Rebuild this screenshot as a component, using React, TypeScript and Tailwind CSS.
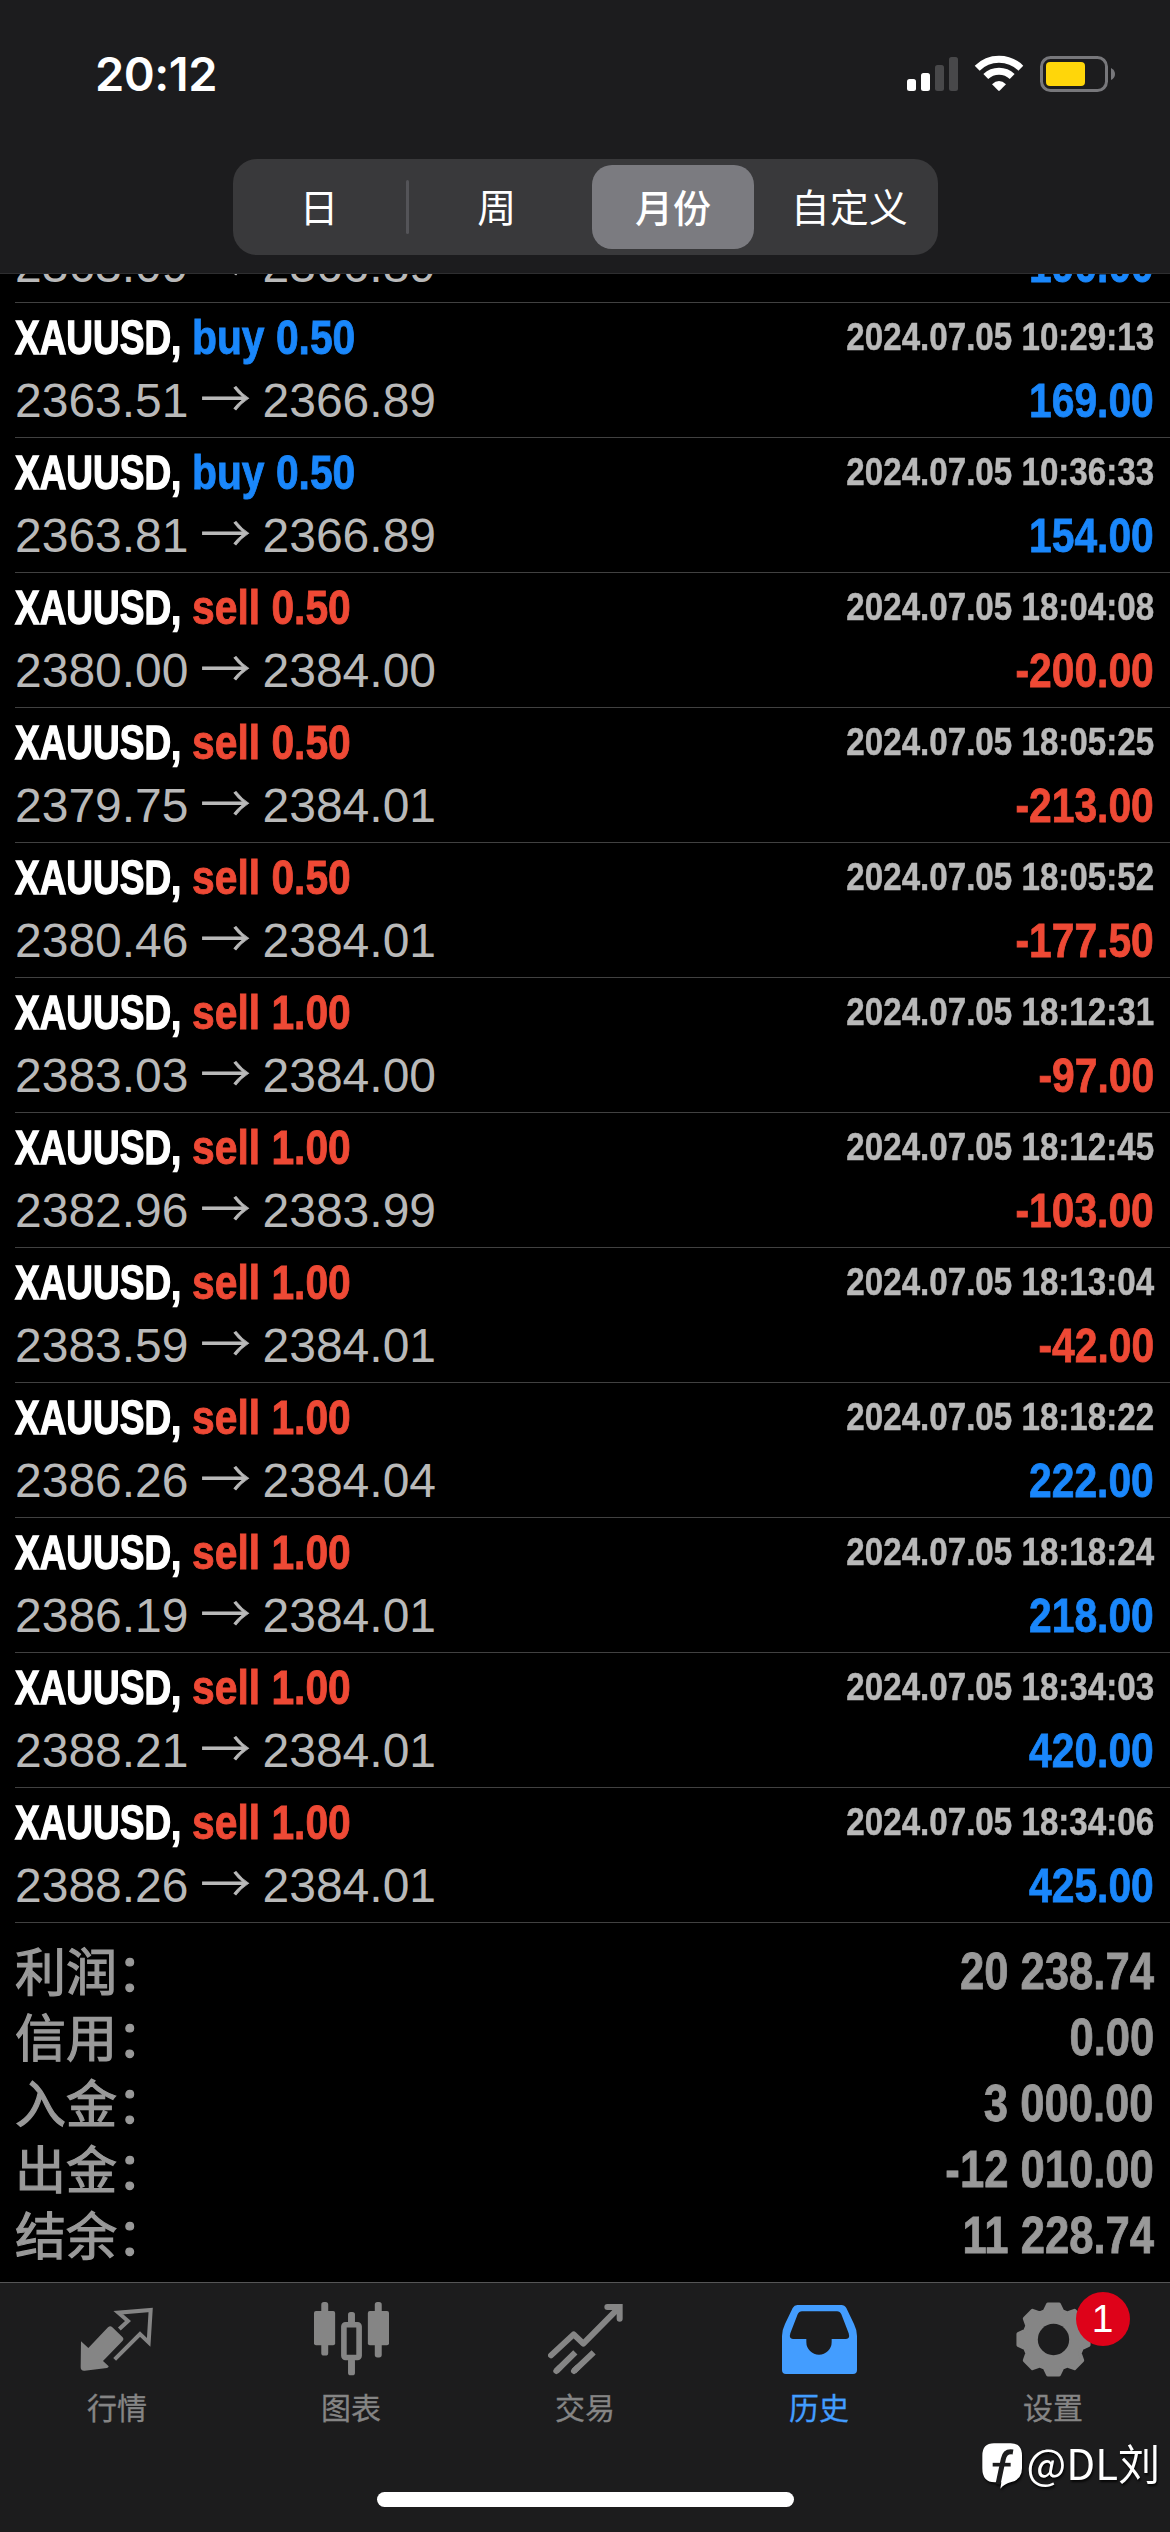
import type { ReactNode } from "react";

type Deal = {
  id: number;
  side: "buy" | "sell";
  volume: string;
  time: string;
  open: string;
  close: string;
  profit: string;
};

const deals: Deal[] = [
  { id: 1, side: "buy", volume: "0.50", time: "2024.07.05 10:29:13", open: "2363.51", close: "2366.89", profit: "169.00" },
  { id: 2, side: "buy", volume: "0.50", time: "2024.07.05 10:36:33", open: "2363.81", close: "2366.89", profit: "154.00" },
  { id: 3, side: "sell", volume: "0.50", time: "2024.07.05 18:04:08", open: "2380.00", close: "2384.00", profit: "-200.00" },
  { id: 4, side: "sell", volume: "0.50", time: "2024.07.05 18:05:25", open: "2379.75", close: "2384.01", profit: "-213.00" },
  { id: 5, side: "sell", volume: "0.50", time: "2024.07.05 18:05:52", open: "2380.46", close: "2384.01", profit: "-177.50" },
  { id: 6, side: "sell", volume: "1.00", time: "2024.07.05 18:12:31", open: "2383.03", close: "2384.00", profit: "-97.00" },
  { id: 7, side: "sell", volume: "1.00", time: "2024.07.05 18:12:45", open: "2382.96", close: "2383.99", profit: "-103.00" },
  { id: 8, side: "sell", volume: "1.00", time: "2024.07.05 18:13:04", open: "2383.59", close: "2384.01", profit: "-42.00" },
  { id: 9, side: "sell", volume: "1.00", time: "2024.07.05 18:18:22", open: "2386.26", close: "2384.04", profit: "222.00" },
  { id: 10, side: "sell", volume: "1.00", time: "2024.07.05 18:18:24", open: "2386.19", close: "2384.01", profit: "218.00" },
  { id: 11, side: "sell", volume: "1.00", time: "2024.07.05 18:34:03", open: "2388.21", close: "2384.01", profit: "420.00" },
  { id: 12, side: "sell", volume: "1.00", time: "2024.07.05 18:34:06", open: "2388.26", close: "2384.01", profit: "425.00" },
];

const summary = [
  { label: "利润", value: "20 238.74" },
  { label: "信用", value: "0.00" },
  { label: "入金", value: "3 000.00" },
  { label: "出金", value: "-12 010.00" },
  { label: "结余", value: "11 228.74" },
];

const periods = ["日", "周", "月份", "自定义"];
const activePeriod = "月份";

function StatusBar() {
  return (
    <div className="flex h-[159px] items-start justify-between pt-[45px] pr-[54px] pl-[95px]">
      <span className="font-['Inter',sans-serif] text-[47px] leading-[58px] font-semibold tracking-[-0.5px] text-white">20:12</span>
      <svg className="mt-[10px] h-[38px] w-[210px]" viewBox="0 0 210 38">
        <g fill="#fff">
          <rect x="1" y="24" width="9" height="12" rx="2.5" />
          <rect x="15" y="18" width="9" height="18" rx="2.5" />
        </g>
        <g fill="#48484a">
          <rect x="29" y="10" width="9" height="26" rx="2.5" />
          <rect x="43" y="2" width="9" height="34" rx="2.5" />
        </g>
        <g fill="none" stroke="#fff" strokeWidth="7">
          <path d="M71.2 13.2 A31 31 0 0 1 114.8 13.2" />
          <path d="M79.8 21.6 A19 19 0 0 1 106.2 21.6" />
        </g>
        <path d="M86 29.3 Q93 22.8 100 29.3 L93.8 35.6 Q93 36.4 92.2 35.6 Z" fill="#fff" />
        <rect x="135.5" y="2.5" width="65" height="33" rx="9" fill="none" stroke="#77777b" strokeWidth="3" />
        <rect x="140" y="7" width="39" height="24" rx="4" fill="#ffd60a" />
        <path d="M205 13 Q209 15 209 19 Q209 23 205 25 Z" fill="#77777b" />
      </svg>
    </div>
  );
}

function PeriodPicker() {
  return (
    <div className="mx-auto grid h-24 w-[705px] grid-cols-4 rounded-[24px] bg-[#39393b]">
      {periods.map((period, i) => (
        <div key={period} className="flex items-center">
          <div
            className={
              period === activePeriod
                ? "mx-[7px] flex h-[84px] flex-1 items-center justify-center rounded-[20px] bg-[#7b7b80] pb-[4px] text-[38px] font-medium"
                : "flex flex-1 items-center justify-center pb-[4px]"
            }
          >
            {period}
          </div>
          {i === 0 && <div className="h-[54px] w-[3px] rounded-full bg-[#545458]" />}
        </div>
      ))}
    </div>
  );
}

function PriceLine({ open, close, profit }: Pick<Deal, "open" | "close" | "profit">) {
  return (
    <div className="flex h-[63px] items-start justify-between text-[48px] leading-[63px]">
      <span className="flex items-baseline text-[#b9b9b9]">
        {open}
        <span className="mx-[12px] font-['Noto_Sans_CJK_SC',sans-serif] text-[50px] leading-[48px] font-light [-webkit-text-stroke:0.8px]">→</span>
        {close}
      </span>
      <span
        className={`origin-right scale-x-85 font-bold [-webkit-text-stroke:0.8px] ${
          profit.startsWith("-") ? "text-[#ee4935]" : "text-[#1a87fb]"
        }`}
      >
        {profit}
      </span>
    </div>
  );
}

function DealRow({ deal }: { deal: Deal }) {
  return (
    <li className="ml-[15px] h-[135px] shrink-0 border-b border-[#414141] pt-[3px] pr-4">
      <div className="flex h-[63px] items-start justify-between font-bold">
        <div className="flex text-[48px] leading-[63px]">
          <span className="w-[177px] origin-left scale-x-[0.77] text-white [-webkit-text-stroke:1.4px]">XAUUSD,</span>
          <span
            className={`origin-left scale-x-[0.85] whitespace-nowrap [-webkit-text-stroke:0.9px] ${
              deal.side === "buy" ? "text-[#1a87fb]" : "text-[#ee4935]"
            }`}
          >
            {deal.side} {deal.volume}
          </span>
        </div>
        <span className="origin-right scale-x-85 text-[39px] leading-[61px] text-[#b9b9b9] [-webkit-text-stroke:0.5px]">{deal.time}</span>
      </div>
      <PriceLine open={deal.open} close={deal.close} profit={deal.profit} />
    </li>
  );
}

function Summary() {
  return (
    <div className="flex h-[359px] flex-col pt-[16px] pr-4 pl-[15px] text-[#999]">
      {summary.map((item) => (
        <div key={item.label} className="flex h-[66px] items-start justify-between">
          <span className="font-['Noto_Sans_CJK_SC',sans-serif] text-[51px] leading-[60px] [-webkit-text-stroke:1.2px]">{item.label}：</span>
          <span className="origin-right scale-x-[0.855] text-[51px] leading-[66px] font-bold [-webkit-text-stroke:0.8px]">{item.value}</span>
        </div>
      ))}
    </div>
  );
}

function QuotesIcon() {
  return (
    <svg className="size-[75px]" viewBox="0 0 225 225">
      <path d="M3 118 L25 138 L84 76 Q91 70 97 76 L128 106 Q133 111 128 116 L69 177 L86 193 Q86 197 81 198 L14 206 Q2 207 2 196 Z" fill="currentColor" />
      <path d="M118 81 L144 57 L115 32 L212 24 L206 121 L180 96 L104 172" fill="none" stroke="currentColor" strokeWidth="12" />
    </svg>
  );
}

function ChartIcon() {
  return (
    <svg className="size-[75px]" viewBox="0 0 227 227" fill="currentColor">
      <rect x="22" y="0" width="21" height="162" rx="8" />
      <rect x="0" y="27" width="64" height="104" rx="6" />
      <rect x="184" y="0" width="21" height="168" rx="8" />
      <rect x="163" y="27" width="64" height="104" rx="6" />
      <rect x="103" y="30" width="21" height="36" rx="8" />
      <rect x="103" y="170" width="21" height="52" rx="8" />
      <rect x="90.5" y="69" width="46" height="99" rx="5" fill="none" stroke="currentColor" strokeWidth="17" />
    </svg>
  );
}

function TradeIcon() {
  return (
    <svg className="size-[75px]" viewBox="0 0 225 225" fill="none" stroke="currentColor" strokeWidth="18">
      <path d="M9 160 L77 97 L106 125 L210 20" strokeLinecap="round" strokeLinejoin="round" />
      <path d="M178 15 H215 V50" strokeLinecap="round" />
      <path d="M25 207 L34 198 M78 207 L87 198" strokeLinecap="round" />
      <path d="M25 207 L82 151 M78 207 L137 151" />
    </svg>
  );
}

function HistoryIcon() {
  return (
    <svg className="size-[75px]" viewBox="0 0 225 225" fill="currentColor">
      <path
        fillRule="evenodd"
        d="M46 9 H178 Q188 9 193 18 L216 66 Q225 84 225 102 V204 Q225 216 213 216 H12 Q0 216 0 204 V102 Q0 84 9 66 L32 18 Q37 9 46 9 Z M60 28 Q51 28 47 37 L25 94 Q20 111 33 111 H73 V120 A38 38 0 0 0 149 120 V111 H192 Q205 111 200 94 L178 37 Q174 28 165 28 Z"
      />
    </svg>
  );
}

// eight teeth around the hub, corners softened by the round stroke
const gearPoints = Array.from({ length: 8 }, (_, tooth) =>
  [[-17.5, 89], [-9, 107], [9, 107], [17.5, 89]].map(([offset, r]) => {
    const a = ((tooth * 45 + offset) * Math.PI) / 180;
    return `${(112.5 + r * Math.sin(a)).toFixed(1)},${(112.5 - r * Math.cos(a)).toFixed(1)}`;
  }).join(" ")
).join(" ");

function SettingsIcon() {
  return (
    <div className="relative">
      <svg className="size-[75px]" viewBox="0 0 225 225">
        <polygon points={gearPoints} fill="currentColor" stroke="currentColor" strokeWidth="11" strokeLinejoin="round" />
        <circle cx="112.5" cy="112.5" r="47" fill="#1c1c1d" />
      </svg>
      <span className="absolute -top-[10px] left-[60px] flex size-[54px] items-center justify-center rounded-full bg-[#de0219] pb-[2px] font-['Liberation_Sans',sans-serif] text-[39px] leading-none text-white">1</span>
    </div>
  );
}

const tabs: { label: string; icon: ReactNode; active?: boolean }[] = [
  { label: "行情", icon: <QuotesIcon /> },
  { label: "图表", icon: <ChartIcon /> },
  { label: "交易", icon: <TradeIcon /> },
  { label: "历史", icon: <HistoryIcon />, active: true },
  { label: "设置", icon: <SettingsIcon /> },
];

function TabBar() {
  return (
    <nav className="flex h-[250px] flex-col justify-between border-t border-[#555556] bg-[#1c1c1d] pb-[25px] font-['Noto_Sans_CJK_SC',sans-serif]">
      <div className="grid grid-cols-5">
        {tabs.map((tab) => (
          <div key={tab.label} className={`flex flex-col items-center pt-[19px] ${tab.active ? "text-[#439dff]" : "text-[#858585]"}`}>
            {tab.icon}
            <span className="mt-[9px] text-[30px] leading-[40px] [-webkit-text-stroke:0.3px]">{tab.label}</span>
          </div>
        ))}
      </div>
      <div className="mx-auto h-[15px] w-[417px] rounded-full bg-white" />
    </nav>
  );
}

function Watermark() {
  return (
    <div className="absolute right-[10px] bottom-[40px] flex items-center gap-[4px] font-['Noto_Sans_CJK_SC',sans-serif] text-[42px] leading-[60px] text-white drop-shadow-[1px_2px_1px_rgba(0,0,0,0.8)]">
      <svg className="mt-[8px] h-[46px] w-[41px]" viewBox="0 0 123 138">
        <path d="M36 1 H86 Q120 1 120 38 V76 Q120 110 88 117 Q68 122 55 137 L58 118 H38 Q1 118 1 76 V38 Q1 1 36 1 Z" fill="#fff" />
        <path d="M93 27 Q69 23 64 48 L48 124" fill="none" stroke="#1c1c1d" strokeWidth="15" />
        <path d="M32 65 H86" fill="none" stroke="#1c1c1d" strokeWidth="11" />
      </svg>
      <span>@DL刘</span>
    </div>
  );
}

export default function App() {
  return (
    <div className="relative flex h-[2532px] w-[1170px] flex-col overflow-hidden bg-black font-['Liberation_Sans','Noto_Sans_CJK_SC',sans-serif]">
      <header className="h-[274px] border-b border-[#2e2e30] bg-[#1c1c1e] font-['Noto_Sans_CJK_SC',sans-serif] text-[39px] text-white">
        <StatusBar />
        <PeriodPicker />
      </header>
      <ul className="flex h-[1649px] flex-col justify-end overflow-hidden">
        {/* oldest deal, scrolled half under the header */}
        <li className="ml-[15px] h-[69px] shrink-0 border-b border-[#414141] pr-4">
          <PriceLine open="2363.09" close="2366.89" profit="190.00" />
        </li>
        {deals.map((deal) => (
          <DealRow key={deal.id} deal={deal} />
        ))}
      </ul>
      <Summary />
      <TabBar />
      <Watermark />
    </div>
  );
}
